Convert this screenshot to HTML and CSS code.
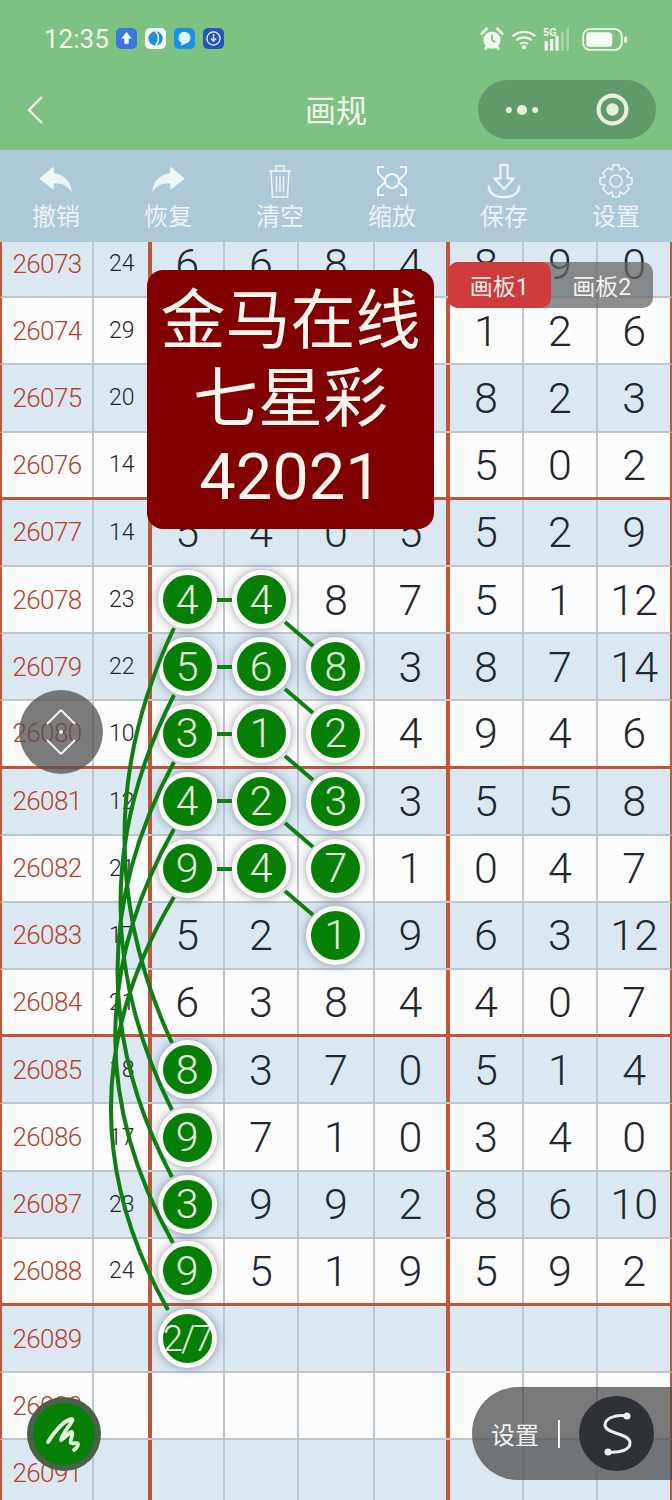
FILE: index.html
```html
<!DOCTYPE html>
<html lang="zh-CN">
<head>
    <meta charset="UTF-8">
    <title>画规</title>
    <link rel="stylesheet" href="styles.css">
</head>
<body>
    <div class="top-bar">
        <div class="status-bar">
            <span class="clock">12:35</span>
            <div class="notify-icons">
                <span class="app-icon blue"><svg viewBox="0 0 16 16"><path d="M8 3l4 5H9.6v4H6.4V8H4z" fill="#fff"/></svg></span>
                <span class="app-icon white"><svg viewBox="0 0 16 16"><circle cx="8" cy="8" r="5.5" fill="#2a8fd8"/><path d="M8 2.5c3 3 3 8 0 11" stroke="#fff" fill="none"/></svg></span>
                <span class="app-icon sky"><svg viewBox="0 0 16 16"><circle cx="8" cy="7.5" r="4.6" fill="#dff2ff"/><path d="M6 11l-1 2.5L9 12z" fill="#dff2ff"/></svg></span>
                <span class="app-icon navy"><svg viewBox="0 0 16 16"><circle cx="8" cy="8" r="5" fill="none" stroke="#fff"/><path d="M8 4.500v5M6 8l2 2 2-2" stroke="#fff" fill="none"/></svg></span>
            </div>
            <div class="sys-icons">
                <svg class="alarm" viewBox="0 0 24 24"><circle cx="12" cy="13" r="8" fill="#f1f8ee"/><path d="M2.500 7L7 2.500M21.500 7L17 2.500M6 21l2-2.500M18 21l-2-2.500" stroke="#f1f8ee" stroke-width="2.400" stroke-linecap="round"/><path d="M12 8v5l3 2" stroke="#7dc283" stroke-width="1.600" fill="none"/></svg>
                <svg class="wifi" viewBox="0 0 24 20"><path d="M1.500 7.500c6-5.500 15-5.500 21 0M5 11.200c4-3.600 10-3.600 14 0M8.400 14.600c2-1.700 5.200-1.700 7.200 0" stroke="#f1f8ee" stroke-width="2" fill="none"/><circle cx="12" cy="17.500" r="2" fill="#f1f8ee"/></svg>
                <svg class="signal" viewBox="0 0 26 24"><text x="0" y="9" class="signal-text">5G</text><path d="M3 14v9M8 12v11M13 9v14" stroke="#f1f8ee" stroke-width="3"/><path d="M18 6v17M23 2v21" stroke="#f1f8ee" stroke-opacity=".45" stroke-width="2"/></svg>
                <svg class="battery" viewBox="0 0 44 24"><rect x="1" y="2" width="37" height="20" rx="6.500" fill="none" stroke="#f1f8ee" stroke-width="1.800"/><rect x="4" y="5" width="25" height="14" rx="3.500" fill="#f8fbf5"/><rect x="40.500" y="9" width="2.500" height="6" rx="1.200" fill="#f1f8ee"/></svg>
            </div>
        </div>
        <div class="nav-bar">
            <svg class="back" viewBox="0 0 20 30"><path d="M16 2L3 15l13 13" fill="none" stroke="#eef6e8" stroke-width="2.400"/></svg>
            <h1>画规</h1>
            <div class="capsule">
                <svg class="dots" viewBox="0 0 30 10"><circle cx="4" cy="5" r="2.500"/><circle cx="15" cy="5" r="4.200"/><circle cx="26" cy="5" r="2.500"/></svg>
                <svg class="target" viewBox="0 0 32 32"><circle cx="16" cy="16" r="13.500" fill="none" stroke="#e6f1da" stroke-width="4"/><circle cx="16" cy="16" r="6" fill="#e6f1da"/></svg>
            </div>
        </div>
    </div>

    <div class="toolbar">
        <div class="tool">
            <svg viewBox="0 0 32 32"><path d="M14 3L1 14l13 10v-6c7-.5 12 2 16 8-.5-9-6-16-16-17z" fill="#f0f5f7"/></svg>
            <span>撤销</span>
        </div>
        <div class="tool">
            <svg viewBox="0 0 32 32"><path d="M18 3l13 11-13 10v-6c-7-.5-12 2-16 8 .5-9 6-16 16-17z" fill="#f0f5f7"/></svg>
            <span>恢复</span>
        </div>
        <div class="tool">
            <svg viewBox="0 0 32 36"><path d="M5 8h22M12 8V3h8v5M7 8l1.500 26h15L25 8M12.500 13v16M16 13v16M19.500 13v16" fill="none" stroke="#f0f5f7" stroke-width="1.500"/></svg>
            <span>清空</span>
        </div>
        <div class="tool">
            <svg viewBox="0 0 36 36"><path d="M10 4H4v6l8 8M26 4h6v6l-8 8M10 32H4v-6l7-7M26 32h6v-6l-7-7" fill="none" stroke="#f0f5f7" stroke-width="2"/><circle cx="18" cy="18" r="7" fill="#adc8d6" stroke="#f0f5f7" stroke-width="2"/></svg>
            <span>缩放</span>
        </div>
        <div class="tool">
            <svg viewBox="0 0 40 40"><path d="M16 2h8v15h7L20 29 9 17h7z" fill="none" stroke="#f0f5f7" stroke-width="2.400" stroke-linejoin="round"/><path d="M3 26c1 9 8 12 17 12s16-3 17-12" fill="none" stroke="#f0f5f7" stroke-width="2.600" stroke-linecap="round"/></svg>
            <span>保存</span>
        </div>
        <div class="tool">
            <svg viewBox="0 0 36 36"><path d="M15 2h6l1 5 4-2 5 5-2 4 5 1v6l-5 1 2 4-5 5-4-2-1 5h-6l-1-5-4 2-5-5 2-4-5-1v-6l5-1-2-4 5-5 4 2z" fill="none" stroke="#f0f5f7" stroke-width="1.500" stroke-linejoin="round"/><circle cx="18" cy="18" r="6" fill="none" stroke="#f0f5f7" stroke-width="1.500"/></svg>
            <span>设置</span>
        </div>
    </div>

    <div class="board">
        <div class="grid">
            <div class="row alt"><b>26073</b><i>24</i><u>6</u><u>6</u><u>8</u><u>4</u><u>8</u><u>9</u><u>0</u></div>
            <div class="row"><b>26074</b><i>29</i><u></u><u></u><u></u><u></u><u>1</u><u>2</u><u>6</u></div>
            <div class="row alt"><b>26075</b><i>20</i><u></u><u></u><u></u><u></u><u>8</u><u>2</u><u>3</u></div>
            <div class="row split"><b>26076</b><i>14</i><u></u><u></u><u></u><u></u><u>5</u><u>0</u><u>2</u></div>
            <div class="row alt"><b>26077</b><i>14</i><u>5</u><u>4</u><u>0</u><u>5</u><u>5</u><u>2</u><u>9</u></div>
            <div class="row"><b>26078</b><i>23</i><u><em>4</em></u><u><em>4</em></u><u>8</u><u>7</u><u>5</u><u>1</u><u>12</u></div>
            <div class="row alt"><b>26079</b><i>22</i><u><em>5</em></u><u><em>6</em></u><u><em>8</em></u><u>3</u><u>8</u><u>7</u><u>14</u></div>
            <div class="row split"><b>26080</b><i>10</i><u><em>3</em></u><u><em>1</em></u><u><em>2</em></u><u>4</u><u>9</u><u>4</u><u>6</u></div>
            <div class="row alt"><b>26081</b><i>12</i><u><em>4</em></u><u><em>2</em></u><u><em>3</em></u><u>3</u><u>5</u><u>5</u><u>8</u></div>
            <div class="row"><b>26082</b><i>21</i><u><em>9</em></u><u><em>4</em></u><u><em>7</em></u><u>1</u><u>0</u><u>4</u><u>7</u></div>
            <div class="row alt"><b>26083</b><i>17</i><u>5</u><u>2</u><u><em>1</em></u><u>9</u><u>6</u><u>3</u><u>12</u></div>
            <div class="row split"><b>26084</b><i>21</i><u>6</u><u>3</u><u>8</u><u>4</u><u>4</u><u>0</u><u>7</u></div>
            <div class="row alt"><b>26085</b><i>18</i><u><em>8</em></u><u>3</u><u>7</u><u>0</u><u>5</u><u>1</u><u>4</u></div>
            <div class="row"><b>26086</b><i>17</i><u><em>9</em></u><u>7</u><u>1</u><u>0</u><u>3</u><u>4</u><u>0</u></div>
            <div class="row alt"><b>26087</b><i>23</i><u><em>3</em></u><u>9</u><u>9</u><u>2</u><u>8</u><u>6</u><u>10</u></div>
            <div class="row split"><b>26088</b><i>24</i><u><em>9</em></u><u>5</u><u>1</u><u>9</u><u>5</u><u>9</u><u>2</u></div>
            <div class="row alt"><b>26089</b><i></i><u><em class="small">2/7</em></u><u></u><u></u><u></u><u></u><u></u><u></u></div>
            <div class="row"><b>26090</b><i></i><u></u><u></u><u></u><u></u><u></u><u></u><u></u></div>
            <div class="row alt"><b>26091</b><i></i><u></u><u></u><u></u><u></u><u></u><u></u><u></u></div>
        </div>

        <!-- lines between the balls, board coordinates -->
        <svg class="lines" viewBox="0 0 672 1258">
            <path d="M217 358h15M217 425h15M217 492h15M217 559h15M217 627h15"/>
            <path d="M285 380l28 24M285 447l28 24M285 514l28 24M285 581l28 24M285 649l28 24"/>
            <path d="M174 386Q76 593 172 801M174 453Q68 660 172 868M174 520Q62 727 172 935M174 587Q57 794 173 1001M174 655Q51 861 168 1068"/>
        </svg>

        <div class="banner">金马在线<br>七星彩<br>42021</div>

        <div class="tabs">
            <span class="tab on">画板1</span>
            <span class="tab">画板2</span>
        </div>

        <div class="scroll-knob">
            <svg viewBox="0 0 36 48"><path d="M18 2L32 16M18 2L4 16M18 46L32 32M18 46L4 32" stroke="#f1f1f1" stroke-width="2" fill="none"/><circle cx="18" cy="24" r="2" fill="#eee"/></svg>
        </div>

        <div class="pen-btn">
            <svg viewBox="0 0 44 44"><path d="M6 30C12 20 22 8 30 7c3 1-10 14-11 21 4-2 8-8 11-8 2 2-3 9-1 11 3 1 7-1 7 1 0 2-2 5-4 6" fill="none" stroke="#e8f4e0" stroke-width="3.800" stroke-linecap="round" stroke-linejoin="round"/></svg>
        </div>

        <div class="set-pill">
            <span class="set-label">设置</span>
            <span class="set-sep"></span>
            <span class="set-round">
                <svg viewBox="0 0 30 44"><path d="M25 4C12 2 3 7 3 13c0 9 25 8 25 18 0 7-10 10-22 9" fill="none" stroke="#eee" stroke-width="3"/><circle cx="25" cy="4" r="3.500" fill="#eee"/><circle cx="6" cy="40" r="3.500" fill="#eee"/></svg>
            </span>
        </div>
    </div>
</body>
</html>
```

FILE: styles.css
```css
* {
    margin: 0;
    padding: 0;
    box-sizing: border-box;
}

body {
    width: 672px;
    height: 1500px;
    overflow: hidden;
    background-color: #fdfcfc;
    font-family: 'Roboto', 'Noto Sans CJK SC', sans-serif;
}

/* Header */
.top-bar {
    height: 150px;
    background-color: #7dc283;
    color: #eef6e8;
}

.status-bar {
    height: 80px;
    padding: 24px 44px 0 44px;
    display: flex;
    align-items: flex-start;
}

.clock {
    font-size: 26px;
    line-height: 30px;
    width: 72px;
}

.notify-icons {
    display: flex;
    gap: 8px;
    margin-left: 0;
    margin-top: 4px;
}

.app-icon {
    width: 21px;
    height: 21px;
    border-radius: 5px;
    display: block;
}

.app-icon svg {
    display: block;
    width: 100%;
    height: 100%;
}

.app-icon.blue { background-color: #3a78e0; }
.app-icon.white { background-color: #f4f8fa; }
.app-icon.sky { background-color: #1c8fe8; }
.app-icon.navy { background-color: #2355c4; }

.sys-icons {
    margin-left: auto;
    display: flex;
    align-items: center;
    gap: 6px;
    height: 30px;
}

.alarm { width: 26px; height: 26px; }
.wifi { width: 26px; height: 22px; }
.signal { width: 28px; height: 26px; }
.battery { width: 46px; height: 25px; margin-left: 5px; }

.signal-text {
    font-size: 10px;
    font-weight: 700;
    fill: #f1f8ee;
}

.nav-bar {
    height: 70px;
    position: relative;
    display: flex;
    align-items: center;
    justify-content: center;
}

.back {
    position: absolute;
    left: 26px;
    top: 15px;
    width: 20px;
    height: 30px;
}

.nav-bar h1 {
    font-size: 31px;
    font-weight: 400;
    margin-top: -14px;
}

.capsule {
    position: absolute;
    right: 16px;
    top: 0;
    width: 178px;
    height: 59px;
    border-radius: 30px;
    background-color: #5f9a68;
    display: flex;
    align-items: center;
    justify-content: space-between;
    padding: 0 27px 0 26px;
}

.dots { width: 36px; height: 12px; fill: #e6f1da; }
.target { width: 33px; height: 33px; }

/* Toolbar */
.toolbar {
    height: 92px;
    background-color: #adc8d6;
    display: grid;
    grid-template-columns: repeat(6, 1fr);
}

.tool {
    height: 92px;
    text-align: center;
    color: #eef3f5;
    font-size: 24px;
    padding-top: 13px;
}

.tool svg {
    display: block;
    width: 40px;
    height: 36px;
    margin: 0 auto 3px auto;
}

.tool span {
    display: block;
    line-height: 30px;
}

/* Number board */
.board {
    position: relative;
    height: 1258px;
    overflow: hidden;
}

.grid {
    margin-top: -11px;
}

.row {
    display: grid;
    grid-template-columns: 92px 57.500px 73.200px 74.700px 75.200px 75.900px 73.200px 74.700px 1fr;
    height: 67.200px;
    align-items: stretch;
    border-bottom: 2px solid #bcc6ce;
    background-color: #fdfcfc;
    border-left: 2px solid #c0553a;
    border-right: 2px solid #c0553a;
}

.row.alt { background-color: #dbe8f2; }
.row.split { border-bottom: 3px solid #c0553a; }

.row b,
.row i,
.row u {
    display: flex;
    align-items: center;
    justify-content: center;
    text-decoration: none;
    font-style: normal;
    font-weight: 400;
    border-right: 2px solid #bcc6ce;
}

.row b {
    font-size: 26px;
    font-weight: 300;
    letter-spacing: -0.6px;
    color: #b9402a;
}

.row i {
    font-size: 23px;
    font-weight: 300;
    color: #20262c;
    padding-left: 2px;
    border-right: 4px solid #c0553a;
}

.row u {
    font-size: 43px;
    color: #23282e;
    font-weight: 300;
}

.row u:nth-child(6) {
    border-right: 4px solid #c0553a;
}

.row u:last-child {
    border-right: none;
}

/* Picked number */
.row em {
    position: relative;
    z-index: 2;
    flex: none;
    width: 59px;
    height: 59px;
    border-radius: 50%;
    background-color: #067f06;
    border: 5px solid #fafaf6;
    box-shadow: 0 0 10px rgba(60, 60, 90, 0.5);
    color: #eaf5e2;
    font-size: 41px;
    font-style: normal;
    font-weight: 300;
    display: flex;
    align-items: center;
    justify-content: center;
}

.row em.small {
    font-size: 36px;
    letter-spacing: -2px;
}

.lines {
    position: absolute;
    left: 0;
    top: 0;
    width: 672px;
    height: 1258px;
    z-index: 3;
    pointer-events: none;
}

.lines path {
    fill: none;
    stroke: #0f7f14;
    stroke-width: 4;
}

/* Things on top of the board */
.banner {
    position: absolute;
    z-index: 4;
    left: 147px;
    top: 28px;
    width: 287px;
    height: 259px;
    border-radius: 16px;
    background-color: #800000;
    color: #fdf6f0;
    font-size: 65px;
    line-height: 78px;
    text-align: center;
    padding-top: 12px;
}

.tabs {
    position: absolute;
    z-index: 4;
    left: 448px;
    top: 20px;
    width: 205px;
    height: 46px;
    display: flex;
    border-radius: 10px;
    background-color: rgba(100, 100, 100, 0.72);
    color: #f6f0ec;
    font-size: 23px;
}

.tab {
    flex: 1;
    display: flex;
    align-items: center;
    justify-content: center;
    border-radius: 10px;
}

.tab.on {
    background-color: #cf3a3a;
}

.scroll-knob {
    position: absolute;
    z-index: 4;
    left: 19px;
    top: 448px;
    width: 84px;
    height: 84px;
    border-radius: 50%;
    background-color: rgba(80, 80, 80, 0.75);
    display: flex;
    align-items: center;
    justify-content: center;
}

.scroll-knob svg {
    width: 36px;
    height: 48px;
}

.pen-btn {
    position: absolute;
    z-index: 4;
    left: 27px;
    top: 1155px;
    width: 74px;
    height: 74px;
    border-radius: 50%;
    background-color: #067f06;
    border: 6px solid rgba(90, 90, 90, 0.8);
    display: flex;
    align-items: center;
    justify-content: center;
}

.pen-btn svg {
    flex: none;
    width: 44px;
    height: 44px;
}

.set-pill {
    position: absolute;
    z-index: 4;
    right: 0;
    top: 1145px;
    width: 200px;
    height: 93px;
    border-radius: 46px 0 0 46px;
    background-color: rgba(70, 70, 70, 0.72);
    display: flex;
    align-items: center;
    padding-left: 19px;
    color: #f2f2f2;
    font-size: 24px;
}

.set-sep {
    width: 2px;
    height: 28px;
    margin-left: 19px;
    background-color: #f2f2f2;
}

.set-round {
    width: 75px;
    height: 75px;
    border-radius: 50%;
    margin-left: 19px;
    background-color: #2e3236;
    display: flex;
    align-items: center;
    justify-content: center;
}

.set-round svg {
    width: 30px;
    height: 44px;
}
```
